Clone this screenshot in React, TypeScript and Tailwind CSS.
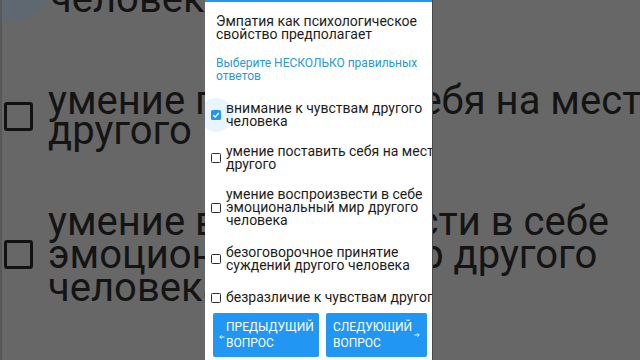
import React from 'react';

interface Option {
  lines: string[];
  checked?: boolean;
  mt: string;
}

const options: Option[] = [
  { lines: ['внимание к чувствам другого', 'человека'], checked: true, mt: 'mt-[19px]' },
  { lines: ['умение поставить себя на место', 'другого'], mt: 'mt-[17px]' },
  { lines: ['умение воспроизвести в себе', 'эмоциональный мир другого', 'человека'], mt: 'mt-[17px]' },
  { lines: ['безоговорочное принятие', 'суждений другого человека'], mt: 'mt-[19px]' },
  { lines: ['безразличие к чувствам другого'], mt: 'mt-[19px]' },
];

const SmallBox: React.FC<{ checked?: boolean }> = ({ checked }) => (
  <div className="relative w-[10px] h-[10px] shrink-0">
    {checked && (
      // ripple left over from the tap
      <div className="absolute -left-[12px] -top-[12px] w-[34px] h-[34px] rounded-full bg-[#2196f3]/10" />
    )}
    {checked ? (
      <div className="relative w-[10px] h-[10px] rounded-[1.5px] bg-[#2196f3] flex items-center justify-center">
        <svg width="8" height="8" viewBox="0 0 8 8">
          <path d="M1.3 4.2 L3.2 6 L6.8 2" fill="none" stroke="#fff" strokeWidth="1.3" />
        </svg>
      </div>
    ) : (
      <div className="w-[10px] h-[10px] rounded-[1.5px] border-[1.5px] border-[#2a2a2a]" />
    )}
  </div>
);

const BigBox: React.FC = () => (
  <div className="w-[29px] h-[29px] shrink-0 rounded-[3px] border-[3px] border-[#121212]" />
);

const Arrow: React.FC<{ dir: 'left' | 'right' }> = ({ dir }) => (
  <svg width="6" height="6" viewBox="0 0 6 6" className="shrink-0">
    {dir === 'left' ? (
      <path d="M5.5 3 H0.8 M2.6 1.2 L0.8 3 L2.6 4.8" fill="none" stroke="#fff" strokeWidth="0.9" />
    ) : (
      <path d="M0.5 3 H5.2 M3.4 1.2 L5.2 3 L3.4 4.8" fill="none" stroke="#fff" strokeWidth="0.9" />
    )}
  </svg>
);

export default function App() {
  return (
    <div className="relative w-[640px] h-[360px] overflow-hidden bg-[#676767] border-l-2 border-[#585858] font-['Roboto',sans-serif]">
      {/* zoomed, dimmed copy of the question behind the card */}
      <div className="absolute inset-0 text-[#141414] text-[40px] whitespace-nowrap">
        <div className="absolute -left-[45px] -top-[78px] w-[100px] h-[100px] rounded-full bg-[#5f6771]" />
        <div className="relative flex flex-col -mt-[16px] pl-[2px]">
          <div className="pl-[46px] leading-[30px]">человека</div>
          <div className="flex items-center gap-[15px] mt-[72px]">
            <BigBox />
            <div className="leading-[30px]">
              <div>умение поставить себя на место</div>
              <div>другого</div>
            </div>
          </div>
          <div className="flex items-center gap-[15px] mt-[59px]">
            <BigBox />
            <div className="leading-[33px]">
              <div>умение воспроизвести в себе</div>
              <div>эмоциональный мир другого</div>
              <div>человека</div>
            </div>
          </div>
        </div>
      </div>

      {/* the card itself */}
      <div className="relative ml-[203px] w-[228px] h-full bg-white border-r border-[#4a4a4a] overflow-hidden flex flex-col">
        <div className="h-[2px] bg-[#2196f3]" />

        <div className="mt-[13px] pl-[11px] text-[14px] leading-[13px] text-[#1c1c1c] whitespace-nowrap">
          Эмпатия как психологическое
          <br />
          свойство предполагает
        </div>

        <div className="mt-[16px] pl-[11px] text-[12px] leading-[13px] text-[#2a98dc] whitespace-nowrap">
          Выберите НЕСКОЛЬКО правильных
          <br />
          ответов
        </div>

        {options.map((o, i) => (
          <div key={i} className={`${o.mt} flex items-center pl-[6px] gap-[5px]`}>
            <SmallBox checked={o.checked} />
            <div className="text-[14px] leading-[13px] text-[#1c1c1c] whitespace-nowrap">
              {o.lines.map((l, j) => (
                <div key={j}>{l}</div>
              ))}
            </div>
          </div>
        ))}

        <div className="mt-[9px] flex pl-[8px] gap-[7px]">
          <button className="w-[106px] h-[44px] shrink-0 rounded-[2px] bg-[#2196f3] flex items-center pl-[6px] gap-[1px] text-white text-[12px] leading-[16px] text-left">
            <span className="mt-[4px]">
              <Arrow dir="left" />
            </span>
            <span>
              ПРЕДЫДУЩИЙ
              <br />
              ВОПРОС
            </span>
          </button>
          <button className="w-[101px] h-[44px] shrink-0 rounded-[2px] bg-[#2196f3] flex items-center pl-[7px] pr-[7px] justify-between text-white text-[12px] leading-[16px] text-left">
            <span>
              СЛЕДУЮЩИЙ
              <br />
              ВОПРОС
            </span>
            <span>
              <Arrow dir="right" />
            </span>
          </button>
        </div>
      </div>
    </div>
  );
}
